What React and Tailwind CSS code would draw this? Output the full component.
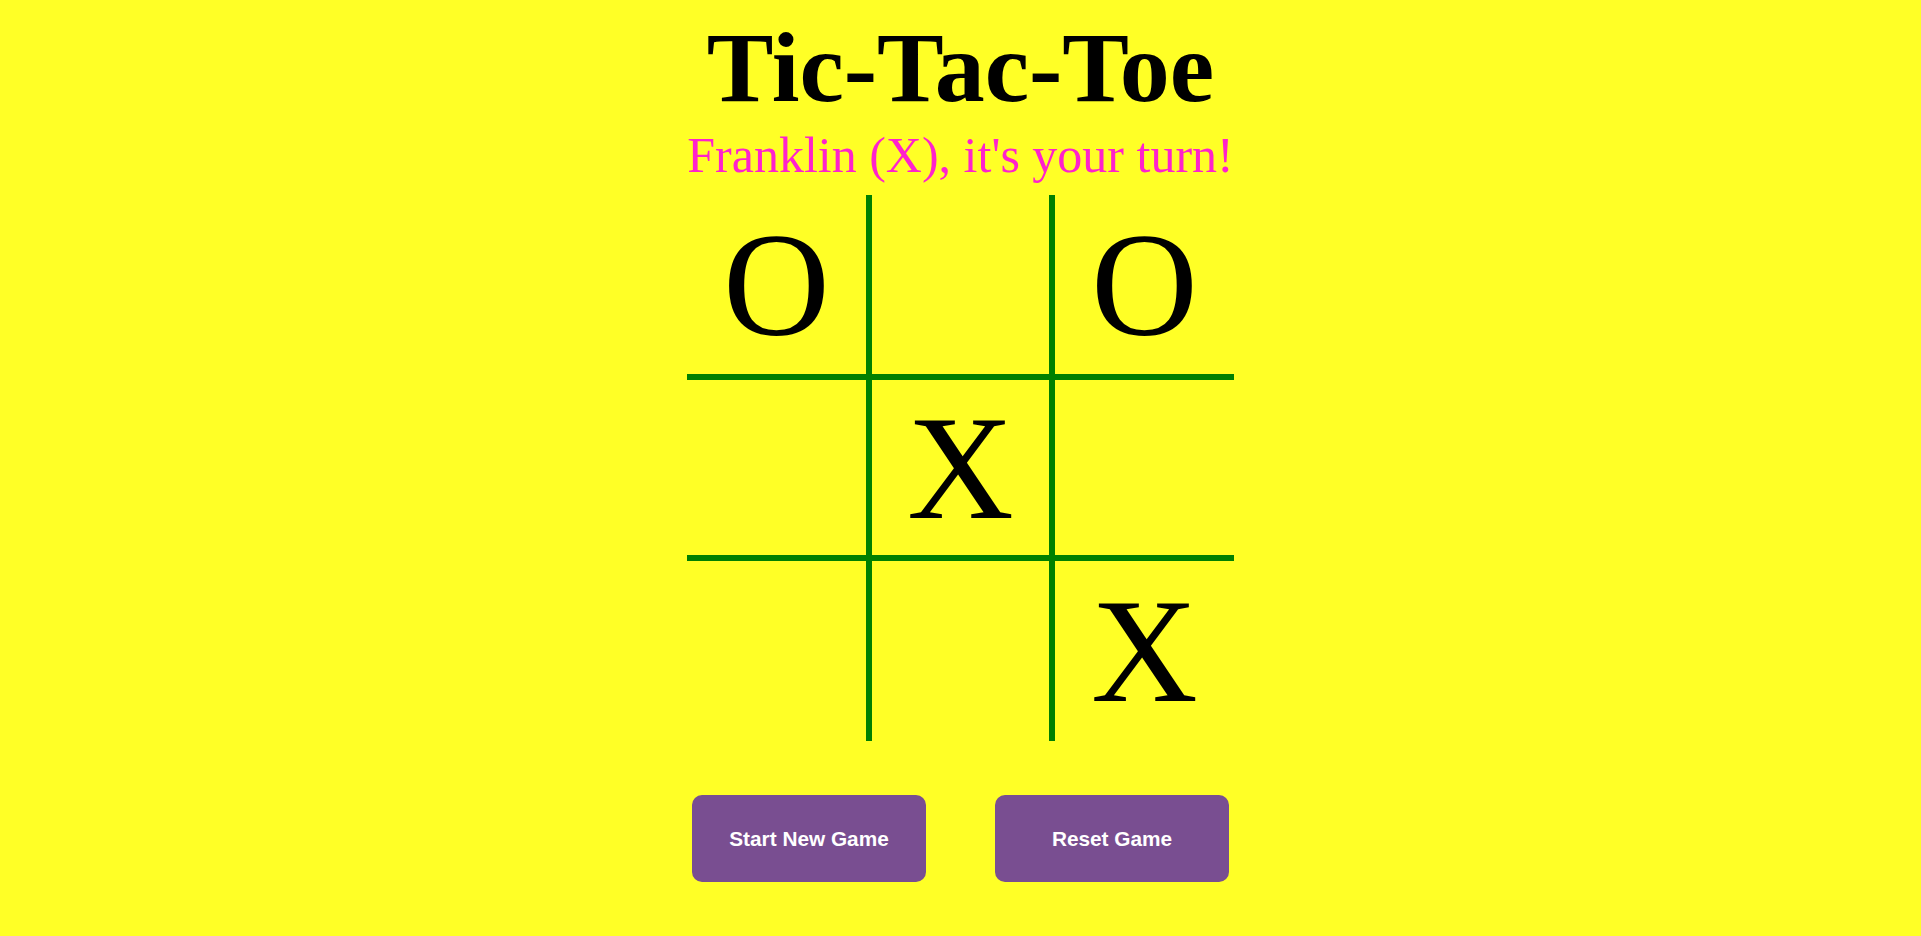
import React from "react";

const board = ["O", "", "O", "", "X", "", "", "", "X"];

export default function App() {
  const colW = ["w-[185px]", "w-[183px]", "w-[179px]"];
  const rowH = ["h-[185px]", "h-[181px]", "h-[180px]"];
  return (
    <div className="min-h-[936px] w-full bg-[#ffff26] flex flex-col items-center">
      <h1
        className="mt-[18px] text-[100px] leading-none font-bold text-black"
        style={{ fontFamily: '"Liberation Serif", serif' }}
      >
        Tic-Tac-Toe
      </h1>
      <p
        className="mt-[12px] text-[50px] leading-none text-[#ff22cc]"
        style={{ fontFamily: '"Liberation Serif", serif' }}
      >
        Franklin (X), it's your turn!
      </p>
      <div className="mt-[15px] flex flex-col">
        {[0, 1, 2].map((r) => (
          <div key={r} className="flex">
            {[0, 1, 2].map((c) => {
              const v = board[r * 3 + c];
              return (
                <div
                  key={c}
                  className={
                    colW[c] +
                    " " +
                    rowH[r] +
                    " border-[#008000] flex items-center justify-center text-[148px] leading-none text-black " +
                    (c < 2 ? "border-r-[6px] " : "") +
                    (r < 2 ? "border-b-[6px]" : "")
                  }
                  style={{ fontFamily: '"Liberation Serif", serif' }}
                >
                  {v}
                </div>
              );
            })}
          </div>
        ))}
      </div>
      <div className="mt-[54px] flex gap-[69px]">
        {["Start New Game", "Reset Game"].map((t) => (
          <button
            key={t}
            className="w-[234px] h-[87px] rounded-[10px] bg-[#794e91] text-white font-bold text-[20.8px] flex items-center justify-center"
            style={{ fontFamily: '"Liberation Sans", Arial, sans-serif' }}
          >
            {t}
          </button>
        ))}
      </div>
    </div>
  );
}
